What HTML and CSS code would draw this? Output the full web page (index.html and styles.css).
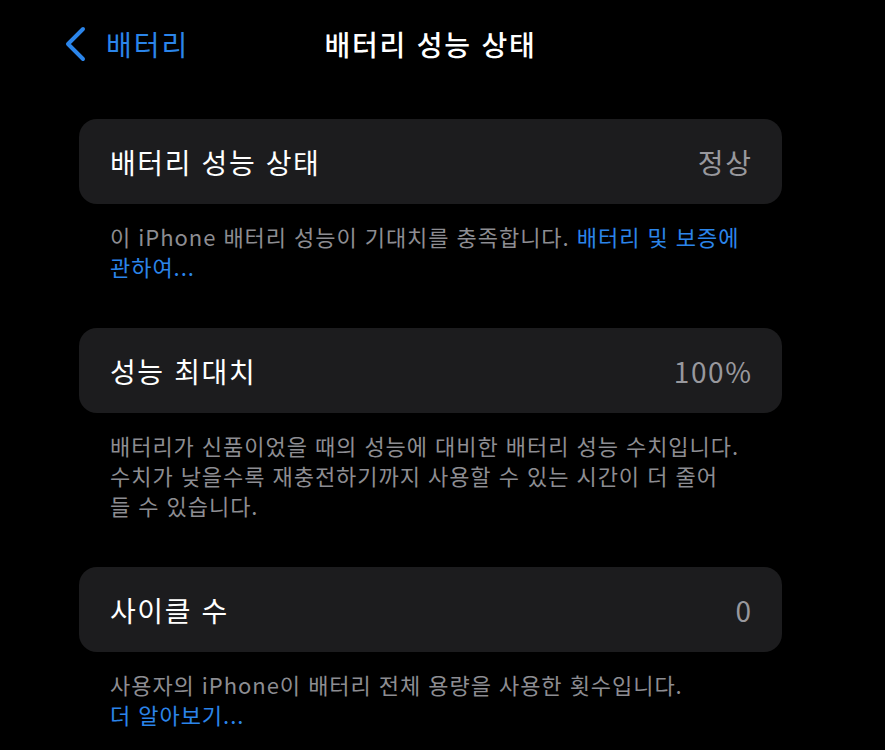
FILE: index.html
```html
<!DOCTYPE html>
<html lang="ko">
<head>
<meta charset="utf-8">
<title>배터리 성능 상태</title>
<link rel="stylesheet" href="styles.css">
</head>
<body>
<div class="page">
  <header class="nav">
    <a class="back">
      <svg class="chevron" width="24" height="36" viewBox="0 0 24 36" aria-hidden="true">
        <path d="M19 3 L4 18 L19 33" fill="none" stroke="#2b85ea" stroke-width="4" stroke-linecap="round" stroke-linejoin="round"/>
      </svg>
      <span class="back-label">배터리</span>
    </a>
    <h1 class="nav-title">배터리 성능 상태</h1>
  </header>

  <main class="content">
    <section class="group">
      <div class="card">
        <span class="label">배터리 성능 상태</span>
        <span class="value">정상</span>
      </div>
      <p class="footer">이 iPhone 배터리 성능이 기대치를 충족합니다. <span class="link">배터리 및 보증에</span><br><span class="link">관하여...</span></p>
    </section>

    <section class="group">
      <div class="card">
        <span class="label">성능 최대치</span>
        <span class="value">100%</span>
      </div>
      <p class="footer">배터리가 신품이었을 때의 성능에 대비한 배터리 성능 수치입니다.<br>수치가 낮을수록 재충전하기까지 사용할 수 있는 시간이 더 줄어<br>들 수 있습니다.</p>
    </section>

    <section class="group">
      <div class="card">
        <span class="label">사이클 수</span>
        <span class="value">0</span>
      </div>
      <p class="footer">사용자의 iPhone이 배터리 전체 용량을 사용한 횟수입니다.<br><span class="link">더 알아보기...</span></p>
    </section>
  </main>
</div>
</body>
</html>
```

FILE: styles.css
```css
html, body {
  margin: 0;
  padding: 0;
  background: #000;
}

body {
  font-family: "Noto Sans CJK KR", "Noto Sans", sans-serif;
  color: #fff;
  width: 885px;
  height: 750px;
  overflow: hidden;
}

.page {
  display: flex;
  flex-direction: column;
}

.nav {
  height: 88px;
  display: grid;
  grid-template-columns: 1fr auto 1fr;
  align-items: center;
  padding: 0 0 0 64px;
  width: 733px;
  box-sizing: content-box;
}

.back {
  display: flex;
  align-items: center;
  gap: 18px;
  color: #2b85ea;
}

.chevron {
  display: block;
}

.back-label {
  font-size: 28px;
  line-height: 36px;
  letter-spacing: 2px;
}

.nav-title {
  margin: 0;
  font-size: 28px;
  font-weight: 500;
  line-height: 36px;
  letter-spacing: 1.8px;
  color: #fff;
  justify-self: center;
}

.content {
  padding-top: 31px;
  padding-left: 79px;
  width: 703px;
  display: flex;
  flex-direction: column;
  gap: 47px;
}

.card {
  height: 85px;
  background: #1c1c1e;
  border-radius: 18px;
  display: flex;
  align-items: center;
  justify-content: space-between;
  padding: 0 31px;
}

.label {
  font-size: 28px;
  line-height: 36px;
  letter-spacing: 1.6px;
  color: #fff;
}

.value {
  font-size: 28px;
  line-height: 36px;
  letter-spacing: 1.6px;
  margin-right: -1.6px;
  color: #98989d;
}

.footer {
  margin: 0;
  padding: 17px 31px 0;
  font-size: 22px;
  line-height: 30px;
  letter-spacing: 0.95px;
  color: #8d8d92;
  white-space: nowrap;
}

.link {
  color: #2b85ea;
}
```
